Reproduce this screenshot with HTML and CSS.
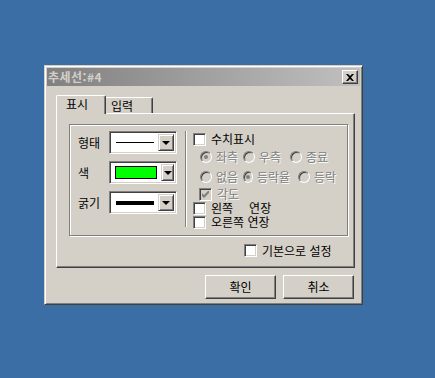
FILE: index.html
```html
<!DOCTYPE html>
<html lang="ko">
<head>
  <meta charset="UTF-8">
  <title>추세선:#4</title>
  <link rel="stylesheet" href="styles.css">
</head>
<body>
  <div class="window">
    <div class="titlebar">
      <span class="title">추세선:#4</span>
      <button class="close-btn">
        <svg width="8" height="7" viewBox="0 0 8 7"><path d="M0 0h2l2 2 2-2h2L5 3.5 8 7H6L4 5 2 7H0l3-3.5z" fill="#000"/></svg>
      </button>
    </div>

    <div class="tabs">
      <div class="tab active">표시</div>
      <div class="tab">입력</div>
    </div>

    <div class="panel">
      <div class="group">
        <div class="left-col">
          <div class="field">
            <span class="label">형태</span>
            <div class="combo">
              <div class="combo-value"><span class="line-thin"></span></div>
              <div class="drop-btn"><span class="arrow"></span></div>
            </div>
          </div>
          <div class="field">
            <span class="label">색</span>
            <div class="combo">
              <div class="combo-value"><span class="swatch"></span></div>
              <div class="drop-btn"><span class="arrow"></span></div>
            </div>
          </div>
          <div class="field">
            <span class="label">굵기</span>
            <div class="combo">
              <div class="combo-value"><span class="line-thick"></span></div>
              <div class="drop-btn"><span class="arrow"></span></div>
            </div>
          </div>
        </div>

        <div class="sep"></div>

        <div class="right-col">
          <label class="opt row-check"><span class="checkbox"></span>수치표시</label>
          <div class="radio-row">
            <label class="opt disabled col-a"><span class="radio checked"></span>좌측</label>
            <label class="opt disabled col-b"><span class="radio"></span>우측</label>
            <label class="opt disabled col-c1"><span class="radio"></span>종료</label>
          </div>
          <div class="radio-row">
            <label class="opt disabled col-a"><span class="radio"></span>없음</label>
            <label class="opt disabled col-b"><span class="radio checked"></span>등락율</label>
            <label class="opt disabled col-c2"><span class="radio"></span>등락</label>
          </div>
          <label class="opt disabled row-angle">
            <span class="checkbox off">
              <svg width="7" height="7" viewBox="0 0 7 7"><path d="M0 2v3l2 2 5-5V-1L2 4z" fill="#808080"/></svg>
            </span>각도
          </label>
          <label class="opt row-check"><span class="checkbox"></span>왼쪽<span class="gap-word">연장</span></label>
          <label class="opt row-check"><span class="checkbox"></span>오른쪽 연장</label>
        </div>
      </div>

      <label class="opt default-row"><span class="checkbox"></span>기본으로 설정</label>
    </div>

    <div class="buttons">
      <button class="btn">확인</button>
      <button class="btn">취소</button>
    </div>
  </div>
</body>
</html>
```

FILE: styles.css
```css
/* Desktop */
body {
  margin: 0;
  background-color: #3a6ea5;
  font-family: "Noto Sans CJK KR", "DejaVu Sans", sans-serif;
  font-size: 12px;
  color: #000;
}

/* Window frame */
.window {
  box-sizing: border-box;
  width: 319px;
  height: 240px;
  margin: 65px 0 0 44px;
  padding: 2px;
  background-color: #d4d0c8;
  border: 1px solid;
  border-color: #d4d0c8 #404040 #404040 #d4d0c8;
  box-shadow: inset 1px 1px #fff, inset -1px -1px #808080;
}

.titlebar {
  height: 18px;
  display: flex;
  align-items: center;
  justify-content: space-between;
  padding: 0 2px 0 1px;
  background: linear-gradient(to right, #808080, #c0c0c0);
}

.title {
  color: #d4d0c8;
  font-weight: bold;
  line-height: 18px;
  letter-spacing: 0.5px;
}

.close-btn {
  box-sizing: border-box;
  width: 16px;
  height: 14px;
  padding: 0;
  display: flex;
  align-items: center;
  justify-content: center;
  background-color: #d4d0c8;
  border: 1px solid;
  border-color: #fff #404040 #404040 #fff;
  box-shadow: inset -1px -1px #808080;
}

/* Tabs */
.tabs {
  display: flex;
  align-items: flex-end;
  height: 18px;
  margin-top: 9px;
  padding-left: 9px;
}

.tab {
  box-sizing: border-box;
  height: 16px;
  width: 48px;
  padding-left: 5px;
  line-height: 15px;
  border: 1px solid;
  border-bottom: none;
  border-color: #fff #404040 #fff #fff;
  box-shadow: inset -1px 0 #808080;
  border-radius: 2px 2px 0 0;
}

.tab.active {
  position: relative;
  z-index: 1;
  height: 19px;
  width: 50px;
  margin-bottom: -1px;
  padding-left: 9px;
  line-height: 16px;
  background-color: #d4d0c8;
}

.tab.active + .tab {
  margin-left: -1px;
  border-left-color: #fff;
}

/* Tab panel */
.panel {
  box-sizing: border-box;
  width: 299px;
  height: 155px;
  margin-left: 9px;
  padding: 10px 0 0 12px;
  border: 1px solid;
  border-color: #fff #404040 #404040 #fff;
  box-shadow: inset -1px -1px #808080;
}

.group {
  box-sizing: border-box;
  width: 279px;
  height: 112px;
  display: flex;
  padding: 6px 0 0 8px;
  border: 1px solid #808080;
  box-shadow: inset 1px 1px #fff, 1px 1px #fff;
}

.left-col {
  display: flex;
  flex-direction: column;
  gap: 7px;
}

.field {
  display: flex;
  align-items: center;
  height: 23px;
}

.label {
  width: 31px;
  line-height: 14px;
}

/* Combo boxes */
.combo {
  box-sizing: border-box;
  width: 68px;
  height: 23px;
  display: flex;
  padding: 2px;
  background-color: #fff;
  border: 1px solid;
  border-color: #808080 #fff #fff #808080;
  box-shadow: inset 1px 1px #404040, inset -1px -1px #d4d0c8;
}

.combo-value {
  flex: 1;
  display: flex;
  align-items: center;
  padding: 0 4px 0 4px;
}

.line-thin {
  width: 100%;
  height: 1px;
  background-color: #000;
}

.line-thick {
  width: 100%;
  height: 4px;
  background-color: #000;
}

.swatch {
  box-sizing: border-box;
  width: 42px;
  height: 13px;
  margin-left: -1px;
  background-color: #00ff00;
  border: 1px solid #000;
}

.drop-btn {
  box-sizing: border-box;
  width: 16px;
  height: 17px;
  display: flex;
  align-items: center;
  justify-content: center;
  background-color: #d4d0c8;
  border: 1px solid;
  border-color: #d4d0c8 #404040 #404040 #d4d0c8;
  box-shadow: inset 1px 1px #fff, inset -1px -1px #808080;
}

.arrow {
  width: 0;
  height: 0;
  border-left: 4px solid transparent;
  border-right: 4px solid transparent;
  border-top: 4px solid #000;
  margin-top: 1px;
}

.sep {
  width: 1px;
  height: 96px;
  margin-left: 8px;
  background-color: #808080;
  border-right: 1px solid #fff;
}

/* Right column options */
.right-col {
  display: flex;
  flex-direction: column;
  padding: 1px 0 0 6px;
}

.opt {
  display: flex;
  align-items: center;
  line-height: 14px;
  white-space: nowrap;
}

.row-check {
  height: 14px;
}

.right-col .row-check:first-child {
  margin-bottom: 1px;
}

.radio-row {
  display: flex;
  height: 20px;
  align-items: center;
  padding-left: 7px;
}

.row-angle {
  height: 14px;
  padding-left: 6px;
}

.disabled {
  color: #808080;
  text-shadow: 1px 1px 0 #fff;
}

.col-a { width: 43px; }
.col-b { width: 47px; }
.col-c2 { margin-left: 8px; }

.checkbox {
  box-sizing: border-box;
  width: 13px;
  height: 13px;
  margin-right: 5px;
  display: flex;
  align-items: center;
  justify-content: center;
  background-color: #fff;
  border: 1px solid;
  border-color: #808080 #fff #fff #808080;
  box-shadow: inset 1px 1px #404040, inset -1px -1px #d4d0c8;
}

.checkbox.off {
  background-color: #d4d0c8;
}

.radio {
  box-sizing: border-box;
  width: 12px;
  height: 12px;
  margin-right: 4px;
  display: flex;
  align-items: center;
  justify-content: center;
  border-radius: 50%;
  background-color: #d4d0c8;
  border: 1px solid;
  border-color: #808080 #fff #fff #808080;
  box-shadow: inset 1px 1px #404040;
}

.radio.checked::after {
  content: '';
  width: 4px;
  height: 4px;
  border-radius: 50%;
  background-color: #808080;
}

.gap-word {
  margin-left: 16px;
}

.default-row {
  height: 13px;
  margin: 8px 0 0 175px;
}

/* Dialog buttons */
.buttons {
  display: flex;
  justify-content: flex-end;
  gap: 7px;
  margin-top: 7px;
  padding-right: 6px;
}

.btn {
  box-sizing: border-box;
  width: 71px;
  height: 24px;
  padding: 0;
  font-family: inherit;
  font-size: 12px;
  line-height: 14px;
  background-color: #d4d0c8;
  border: 1px solid;
  border-color: #fff #404040 #404040 #fff;
  box-shadow: inset -1px -1px #808080;
}
```
